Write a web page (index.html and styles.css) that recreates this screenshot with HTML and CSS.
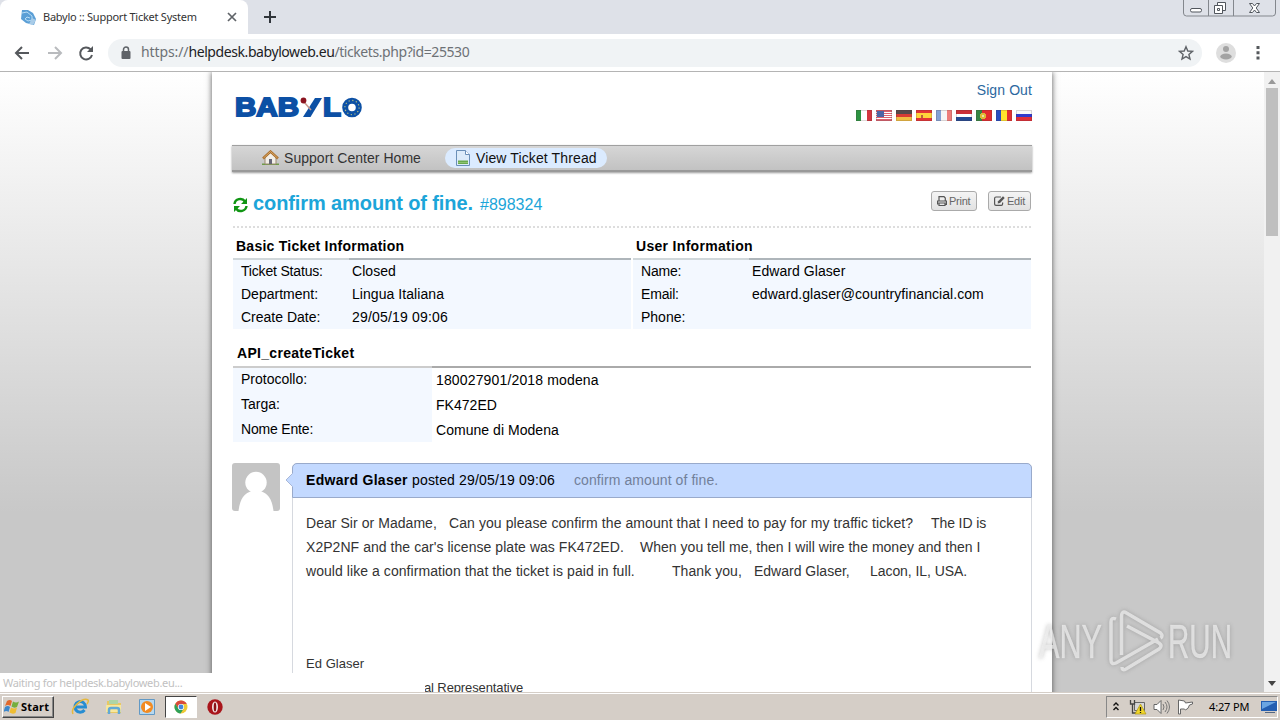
FILE: index.html
```html
<!DOCTYPE html>
<html lang="en">
<head>
<meta charset="utf-8">
<title>Babylo :: Support Ticket System</title>
<link rel="stylesheet" href="styles.css">
</head>
<body>
<div class="screen">
  <header class="tabs">
    <div class="tab">
      <svg class="favicon" width="17" height="17" viewBox="0 0 17 17"><path d="M2 1h6l5 3 3 6-2 6-8-2-5-4z" fill="#5b9fd6"/><path d="M2 4l5-1 5 4 0 4-4 1-3-2 2-2 3 1" fill="none" stroke="#b9ddf5" stroke-width="1"/><path d="M12 9l4 2-3 5-4-1" fill="#a9cce8"/></svg>
      <span class="tab-title">Babylo :: Support Ticket System</span>
      <svg class="tab-close" width="10" height="10" viewBox="0 0 10 10"><path d="M1 1l8 8M9 1l-8 8" stroke="#5f6368" stroke-width="1.7"/></svg>
    </div>
    <svg class="new-tab" width="12" height="12" viewBox="0 0 12 12"><path d="M6 0v12M0 6h12" stroke="#30353b" stroke-width="2"/></svg>
    <svg class="win-controls" width="94" height="18" viewBox="0 0 94 18"><path d="M.5 0v13q0 3 3 3h86q3 0 3-3V0M25.500 0v16M50.500 0v16" fill="none" stroke="#83878d"/><rect x="7.500" y="8.500" width="11" height="3.500" rx="1.500" fill="#fff" stroke="#51565d"/><path d="M34.500 2.500h8v8h-8z" fill="#fff" stroke="#51565d"/><path d="M31.500 5.500h8v8h-8z" fill="#fff" stroke="#51565d"/><path d="M34.500 8.500h2v2h-2z" fill="#fff" stroke="#51565d"/><path d="M66.500 3.500h3l2 2.500 2-2.500h3L73.200 8l3.300 4.500h-3l-2-2.500-2 2.500h-3L69.800 8z" fill="#fff" stroke="#51565d"/></svg>
  </header>
  <div class="toolbar">
    <svg class="nav-icons" width="84" height="18" viewBox="0 0 84 18"><path d="M15 9H2M8 3L2 9l6 6" fill="none" stroke="#55585c" stroke-width="2"/><path d="M34 9h12M41 3l6 6-6 6" fill="none" stroke="#b9bbbe" stroke-width="2"/><path d="M76.500 5.200A6 6 0 1 0 78 11" fill="none" stroke="#55585c" stroke-width="2"/><path d="M79 2v6h-6z" fill="#55585c"/></svg>
    <div class="omnibox">
      <svg width="10" height="14" viewBox="0 0 10 14"><path d="M2.500 6V3.500a2.500 2.500 0 0 1 5 0V6" fill="none" stroke="#5f6368" stroke-width="1.500"/><rect x=".5" y="5" width="9" height="8" rx="1" fill="#5f6368"/></svg>
      <span class="url"><i class="scheme">https://</i><b>helpdesk.babyloweb.eu</b>/tickets.php?id=25530</span>
      <svg class="star" width="16" height="16" viewBox="0 0 16 16"><path d="M8 1.700l1.800 4.300 4.700.4-3.600 3.100 1.100 4.500L8 11.600 4 14l1.100-4.500L1.500 6.400 6.200 6z" fill="none" stroke="#5f6368" stroke-width="1.400"/></svg>
    </div>
    <svg class="profile" width="20" height="20" viewBox="0 0 20 20"><circle cx="10" cy="10" r="10" fill="#dedede"/><circle cx="10" cy="6" r="3" fill="#a3a3a3"/><ellipse cx="10" cy="13.500" rx="5.700" ry="3" fill="#a3a3a3"/></svg>
    <svg class="kebab" width="4" height="14" viewBox="0 0 4 14"><path d="M.5 0h3v3h-3zM.5 5.300h3v3h-3zM.5 10.500h3v3h-3z" fill="#55585c"/></svg>
  </div>
  <div class="viewport">
    <main class="page">
      <div class="masthead">
        <svg class="logo" width="130" height="34" viewBox="0 -5 130 34"><text x="0" y="20" class="logo-text" textLength="64" lengthAdjust="spacingAndGlyphs">BAB</text><path d="M87 2h-7L68 21h7.500z" fill="#0c50a5"/><path d="M69 6l7 8" stroke="#c8988c" stroke-width="1.500"/><circle cx="68.500" cy="4.500" r="2.900" fill="#8b1420"/><text x="88" y="20" class="logo-text" textLength="18" lengthAdjust="spacingAndGlyphs">L</text><circle cx="117" cy="11.500" r="6.800" fill="none" stroke="#0c50a5" stroke-width="6"/><circle cx="117" cy="11.500" r="7.100" fill="none" stroke="#b4bf80" stroke-width="1.200" stroke-dasharray="1.200 2.520"/></svg>
        <div class="account">
          <span class="signout">Sign Out</span>
          <div class="flags">
            <i class="flag it"></i>
            <i class="flag us"></i>
            <i class="flag de"></i>
            <i class="flag es"></i>
            <i class="flag fr"></i>
            <i class="flag nl"></i>
            <i class="flag pt"></i>
            <i class="flag ro"></i>
            <i class="flag ru"></i>
          </div>
        </div>
      </div>
      <nav class="menu">
        <span class="menu-item"><svg width="17" height="16" viewBox="0 0 17 16"><path d="M0 13.500h17V15H0z" fill="#6f9b48"/><path d="M3 7l5.500-5L14 7v7H3z" fill="#f2efe8" stroke="#9b8970"/><path d="M1 8.500l7.500-7 7.500 7" fill="none" stroke="#a86d2c" stroke-width="2.400"/><path d="M1.500 8l7-6.500 7 6.500" fill="none" stroke="#e0b06b" stroke-width=".9"/><path d="M7 9h3v5H7z" fill="#667"/></svg><span class="home-label">Support Center Home</span></span>
        <span class="menu-item active"><svg width="14" height="16" viewBox="0 0 14 16"><path d="M.5.500h9l4 4v11H.5z" fill="#dcebfa" stroke="#6a8fb8"/><path d="M9.500.500v4h4" fill="#fff" stroke="#6a8fb8"/><path d="M2 10.500h10V14H2z" fill="#68a84d"/><path d="M2 12.500h10" stroke="#8cc36f"/></svg><span class="view-label">View Ticket Thread</span></span>
      </nav>
      <div class="title-row">
        <svg class="refresh" width="15" height="16" viewBox="0 0 15 16"><path d="M1.500 7C2 2 9 0 12 4.500M13.500 9C13 14 6 16 3 11.500" fill="none" stroke="#109513" stroke-width="2.400"/><path d="M14 1v6H8zM1 15V9h6z" fill="#109513"/></svg>
        <h1>confirm amount of fine.</h1>
        <span class="number">#898324</span>
        <span class="button print"><svg width="10" height="10" viewBox="0 0 10 10"><path d="M2 5V.600h5L8.300 2v3M.6 8.500V5h8.800v3.500H8M2 7h6v2.500H2z" fill="none" stroke="#555" stroke-width="1.200"/></svg>Print</span>
        <span class="button edit"><svg width="11" height="10" viewBox="0 0 11 10"><path d="M7 1H2Q.6 1 .6 2.400V8Q.6 9.400 2 9.400h5.300q1.300 0 1.300-1.400V6.500" fill="none" stroke="#555" stroke-width="1.200"/><path d="M9 .300l1.700 1.600L6 7l-2.300.500.400-2.300z" fill="#555"/></svg>Edit</span>
      </div>
      <div class="info">
        <section>
          <h2>Basic Ticket Information</h2>
          <dl>
            <dt class="tight">Ticket Status:</dt><dd>Closed</dd>
            <dt>Department:</dt><dd>Lingua Italiana</dd>
            <dt>Create Date:</dt><dd class="date">29/05/19 09:06</dd>
          </dl>
        </section>
        <section>
          <h2>User Information</h2>
          <dl>
            <dt class="tight">Name:</dt><dd>Edward Glaser</dd>
            <dt class="tight">Email:</dt><dd>edward.glaser@countryfinancial.com</dd>
            <dt>Phone:</dt><dd></dd>
          </dl>
        </section>
      </div>
      <section class="api">
        <h2>API_createTicket</h2>
        <dl>
          <dt>Protocollo:</dt><dd>180027901/2018 modena</dd>
          <dt>Targa:</dt><dd class="snug">FK472ED</dd>
          <dt class="tight">Nome Ente:</dt><dd class="snug">Comune di Modena</dd>
        </dl>
      </section>
      <div class="thread">
        <svg class="avatar" width="48" height="48" viewBox="0 0 48 48"><rect width="48" height="48" rx="3" fill="#c4c4c4"/><circle cx="24" cy="19.500" r="10.700" fill="#fff"/><path d="M6.500 48C8 36 12 30 20 28h8c8 2 12 8 13.500 20z" fill="#fff"/></svg>
        <article class="post">
          <div class="post-head"><svg class="notch" width="8" height="14" viewBox="0 0 8 14"><path d="M8 0L1 7l7 7z" fill="#c3d9ff"/><path d="M7.500.500L1 7l6.500 6.500" fill="none" stroke="#a9b8d8"/></svg><strong>Edward Glaser</strong><span class="posted">posted 29/05/19 09:06</span><span class="subject">confirm amount of fine.</span></div>
          <div class="post-body">
            <p><span class="a1">Dear Sir or Madame,</span><span class="a2">Can you please confirm the amount that I need to pay for my traffic ticket?</span><span class="a3">The ID is</span></p>
            <p><span class="b1">X2P2NF and the car's license plate was FK472ED.</span><span class="b2">When you tell me, then I will wire the money and then I</span></p>
            <p><span class="c1">would like a confirmation that the ticket is paid in full.</span><span class="c2">Thank you,</span><span class="c3">Edward Glaser,</span><span class="c4">Lacon, IL, USA.</span></p>
            <p class="signature">Ed Glaser</p>
            <p class="role">al Representative</p>
          </div>
        </article>
      </div>
    </main>
    <div class="scrollbar"><i class="arrow up"></i><i class="thumb"></i><i class="arrow down"></i></div>
    <div class="status">Waiting for helpdesk.babyloweb.eu...</div>
    <svg class="watermark" width="204" height="70" viewBox="0 0 204 70"><g class="wm"><text x="3" y="53" textLength="63" lengthAdjust="spacingAndGlyphs">ANY</text><text x="132" y="53" textLength="64" lengthAdjust="spacingAndGlyphs">RUN</text></g><path d="M80 14q-5-2-5 3v38q0 5 5 3l42-24M85.500 50V12q0-7 5-4l34 20q3 3 0 5M91 21l32 17q4 3 0 6L90 64q-4 2-4-2" fill="none" stroke="#f0f0f0" stroke-opacity=".72" stroke-width="3.500"/></svg>
  </div>
  <footer class="taskbar">
    <div class="start"><svg width="16" height="16" viewBox="0 0 16 16"><path d="M3 2q3-2 5 0L6.500 7Q4 5 1 7z" fill="#e2692d"/><path d="M9 2.500q3 2 6 0L13 8q-3 1.500-5.500-.5z" fill="#75ae3e"/><path d="M1 8q3-2 5 0l-1.500 5q-2-2-5 0z" fill="#3d87cb"/><path d="M7 8.500q3 2 6 0L11.500 14q-3 1.500-6-.5z" fill="#efbd32"/></svg>Start</div>
    <svg class="ie" width="18" height="18" viewBox="0 0 18 18"><path d="M13.500 12a5.300 5.300 0 1 1 1-3H5" fill="none" stroke="#278dd2" stroke-width="3"/><path d="M2 16C-1 10 12-1 17 2q1 1-1 4" fill="none" stroke="#e6b83d" stroke-width="1.500"/></svg>
    <svg class="folder" width="18" height="18" viewBox="0 0 18 18"><path d="M2 3h5l1 2h8v10H2z" fill="#e8c864"/><path d="M4 2h9v4H4z" fill="#aed5a6"/><path d="M1 7h15v7H1z" fill="#f7e79c"/><path d="M4 16v-4q0-2 2-2h6q2 0 2 2v4" fill="none" stroke="#62a9d6" stroke-width="2.500"/></svg>
    <svg class="media" width="16" height="16" viewBox="0 0 16 16"><path d="M.5.500h15v15H.5z" fill="#b7d8ef" stroke="#6299c5"/><circle cx="8" cy="8" r="6" fill="#f28b22"/><path d="M6 4l6 4-6 4z" fill="#fff"/></svg>
    <div class="task-active"><svg width="14" height="14" viewBox="0 0 14 14"><circle cx="7" cy="7" r="6.500" fill="#efc936"/><path d="M1.300 3.800A6.500 6.500 0 0 1 12.800 4H7L4.300 8.500z" fill="#d94a3c"/><path d="M1.300 3.800A6.500 6.500 0 0 0 6.500 13.500L9.500 9 4.300 8.500z" fill="#2da05a"/><circle cx="7" cy="7" r="3.100" fill="#fff"/><circle cx="7" cy="7" r="2.400" fill="#4286dc"/></svg></div>
    <svg class="opera" width="16" height="16" viewBox="0 0 16 16"><circle cx="8" cy="8" r="7.700" fill="#a9151b"/><ellipse cx="8" cy="8" rx="3" ry="5.600" fill="#f3e8e8"/><ellipse cx="8" cy="8" rx="1.300" ry="4.600" fill="#8b1116"/></svg>
    <div class="tray">
      <svg width="8" height="12" viewBox="0 0 8 12"><path d="M1.500 4.500L4 2l2.500 2.500M1.500 9L4 6.500 6.500 9" fill="none" stroke="#111" stroke-width="1.400"/></svg>
      <svg class="net" width="18" height="16" viewBox="0 0 18 16"><path d="M5.500 3.500h10v8h-10z" fill="#d6d6d6" stroke="#666"/><path d="M1.500 1v4h4V1M3.500 5v9h5" fill="none" stroke="#444" stroke-width="1.300"/><path d="M11.500 5l5.500 10H6z" fill="#f1d629" stroke="#ad9715" stroke-width=".7"/><path d="M11.500 8v4M11.500 13v1" stroke="#111" stroke-width="1.300"/></svg>
      <svg class="sound" width="17" height="16" viewBox="0 0 17 16"><path d="M1 5.500h3l4-4v13l-4-4H1z" fill="#fff" stroke="#666"/><path d="M10 5q2 3 0 6M12 3q4 5 0 10M14 1.500q5 6.500 0 13" fill="none" stroke="#777"/></svg>
      <svg class="flag-icon" width="17" height="16" viewBox="0 0 17 16"><path d="M1.500 1v14h2v-5h4l1 1q3-1 4-5l3-1V3l-7 1-1-2z" fill="#fff" stroke="#666"/></svg>
      <span class="clock">4:27 PM</span>
      <svg class="desktop" width="16" height="14" viewBox="0 0 16 14"><path d="M0 1h16v10H0z" fill="#245eb1"/><path d="M1 2h14L1 9z" fill="#6ba5e2"/><path d="M4 12h10v1H4z" fill="#536783"/></svg>
    </div>
  </footer>
</div>
</body>
</html>
```

FILE: styles.css
```css
* { box-sizing: border-box; }
body { margin: 0; font-family: "Liberation Sans", Arial, sans-serif; font-size: 14px; color: #000; }
svg { display: block; flex: none; }
h1, h2, p, dl, dd { margin: 0; }
.screen { width: 1280px; height: 720px; display: flex; flex-direction: column; overflow: hidden; }
.tabs { height: 34px; background: #dee1e8; display: flex; align-items: flex-start; flex: none; }
.tab { width: 248px; height: 34px; background: #fff; border-radius: 8px 8px 0 0; display: flex; align-items: center; padding: 0 11px 0 20px; }
.tab-title { font: 11px "Noto Sans", sans-serif; margin: -2px 0 0 6px; width: 185px; white-space: nowrap; letter-spacing: -.25px; color: #333; }
.tab-close { margin-left: -1px; }
.new-tab { margin: 11px 0 0 16px; }
.win-controls { margin-left: auto; margin-right: 3px; }
.toolbar { height: 38px; background: #fff; border-bottom: 1px solid #b4b4b4; display: flex; align-items: center; flex: none; }
.nav-icons { margin-left: 14px; }
.omnibox { margin-left: 10px; width: 1094px; height: 28px; border-radius: 14px; background: #f0f3f5; display: flex; align-items: center; padding: 0 8px 0 13px; }
.url { font-family: "Noto Sans", sans-serif; font-size: 14px; line-height: 18px; margin: -2px 0 0 10px; color: #6d7175; letter-spacing: -.42px; }
.url b { font-weight: 400; color: #202124; }
.scheme { font-style: normal; letter-spacing: -.1px; }
.star { margin-left: auto; }
.profile { margin-left: 14px; }
.kebab { margin-left: 20px; }
.viewport { height: 620px; flex: none; position: relative; background: linear-gradient(#fff 0, #c8c8c8 440px); display: flex; justify-content: space-between; overflow: hidden; }
.page { width: 840px; margin-left: 212px; height: 650px; background: #fff; box-shadow: 0 0 6px #555; padding: 0 20px; }
.masthead { height: 73px; display: flex; justify-content: space-between; }
.logo { margin: 19px 0 0 3px; }
.logo-text { font: bold 25px "Liberation Sans", sans-serif; fill: #0c50a5; stroke: #0c50a5; stroke-width: 1.8px; }
.account { display: flex; flex-direction: column; align-items: flex-end; padding-top: 9px; }
.signout { color: #2c68a0; line-height: 18px; letter-spacing: .1px; }
.flags { display: flex; gap: 4px; margin-top: 11px; }
.flag { width: 16px; height: 11px; border: 1px solid rgba(70,50,50,.18); }
.it { background: linear-gradient(90deg, #2c9342 33%, #fff 33% 66%, #d43640 66%) border-box; }
.us { background: linear-gradient(#4c65a5, #4c65a5) 0 0 / 7px 6px no-repeat, repeating-linear-gradient(#da6270 0 1px, #fff 1px 2px); }
.de { background: linear-gradient(#55494b 33%, #d63c35 33% 66%, #f0bd43 66%) border-box; }
.es { background: linear-gradient(90deg, transparent 25%, #ba633c 25% 38%, transparent 38%) 0 4px / 16px 3px no-repeat, linear-gradient(#e33436 27%, #ffd43b 27% 73%, #e33436 73%) border-box; }
.fr { background: linear-gradient(90deg, #84a1d5 33%, #f6f6f6 33% 66%, #ed7d7b 66%) border-box; }
.nl { background: linear-gradient(#cb3038 33%, #fff 33% 66%, #244a93 66%) border-box; }
.pt { background: radial-gradient(circle at 6px 5px, #e9e2a2 0 1.5px, #ddba35 1.5px 3px, transparent 3px), linear-gradient(90deg, #368544 38%, #e12d2f 38%) border-box; }
.ro { background: linear-gradient(90deg, #284dc0 33%, #ffe52c 33% 66%, #e23130 66%) border-box; }
.ru { background: linear-gradient(#f8f8f8 33%, #303acb 33% 66%, #df2e37 66%) border-box; }
.menu { height: 27px; border-top: 1px solid #a0a0a0; border-bottom: 2px solid #999; background: linear-gradient(#d6d6d6, #c2c2c2); box-shadow: 0 1px 2px #999; display: flex; align-items: center; padding-left: 30px; color: #333; }
.menu-item { display: flex; align-items: center; gap: 5px; height: 20px; white-space: nowrap; }
.menu-item.active { margin-left: 24px; width: 162px; background: #dbebff; border-radius: 10px; padding-left: 11px; gap: 6px; color: #111; }
.home-label { letter-spacing: .04px; width: 137px; }
.view-label { letter-spacing: .12px; }
.title-row { height: 56px; margin: 0 1px; border-bottom: 2px dotted #ddd; display: flex; align-items: flex-start; }
.refresh { margin-top: 25px; }
h1 { font-size: 20px; line-height: 24px; color: #1ca5d9; margin: 19px 0 0 5px; letter-spacing: -.1px; width: 220px; white-space: nowrap; }
.number { color: #1ca5d9; font-size: 16px; line-height: 20px; margin: 23px 0 0 7px; }
.button { height: 20px; margin-top: 19px; border: 1px solid #aaa; border-radius: 3px; background: linear-gradient(#f4f4f4, #e2e2e2); font-size: 11px; letter-spacing: -.25px; color: #666; display: flex; align-items: center; gap: 2px; padding-left: 5px; white-space: nowrap; }
.print { width: 46px; margin-left: auto; margin-right: 11px; }
.edit { width: 43px; }
.info { display: flex; gap: 2px; margin: 0 1px; }
.info section { width: 398px; }
h2 { font-size: 14px; line-height: 16px; letter-spacing: .25px; white-space: nowrap; }
.info h2 { height: 30px; padding: 10px 0 0 3px; }
.info section + section h2 { letter-spacing: .31px; }
.info dl { display: grid; grid-template-columns: 116px 1fr; grid-auto-rows: 23px; line-height: 23px; background: linear-gradient(90deg, #d0d7da 116px, #aeb5ba 116px) 0 0 / 100% 2px no-repeat, #f3f8ff; padding-top: 2px; height: 71px; }
dt { padding-left: 8px; }
.tight { letter-spacing: -.18px; }
.info dd { padding-left: 3px; letter-spacing: .06px; }
.info .date { letter-spacing: .18px; }
.api { margin: 0 1px; height: 134px; padding-top: 16px; }
.api h2 { height: 21px; padding-left: 4px; letter-spacing: .3px; }
.api dl { display: grid; grid-template-columns: 199px 1fr; grid-auto-rows: 25px; line-height: 23px; background: linear-gradient(90deg, #ccc 199px, #aaa 199px) 0 0 / 100% 2px no-repeat, linear-gradient(90deg, #f3f8ff 199px, #fff 199px); padding-top: 2px; height: 76px; }
.api dd { padding: 1px 0 0 4px; letter-spacing: .15px; }
.api .snug { letter-spacing: .04px; }
.thread { display: flex; gap: 12px; }
.post { width: 740px; height: 240px; border: 1px solid #d6d9df; border-radius: 5px 5px 0 0; }
.post-head { position: relative; height: 35px; margin: -1px -1px 0; border: 1px solid #99aacb; border-radius: 5px 5px 0 0; background: #c3d9ff; padding-left: 13px; line-height: 33px; display: flex; white-space: nowrap; }
.notch { position: absolute; left: -8px; top: 9px; }
.post-head strong { width: 106px; letter-spacing: .29px; }
.posted { width: 162px; letter-spacing: .17px; }
.subject { color: #72809a; letter-spacing: .08px; }
.post-body { padding: 13px 0 0 13px; color: #333; }
.post-body p { height: 24px; line-height: 24px; display: flex; white-space: nowrap; }
.a1 { width: 143px; letter-spacing: .05px; }
.a2 { width: 482px; letter-spacing: .08px; }
.a3 { letter-spacing: -.1px; }
.b1 { width: 334px; letter-spacing: .05px; }
.b2 { letter-spacing: .02px; }
.c1 { width: 366px; letter-spacing: .06px; }
.c2 { width: 82px; letter-spacing: .06px; }
.c3 { width: 116px; }
.c4 { letter-spacing: -.06px; }
.post-body .signature { margin-top: 69px; font-size: 13px; letter-spacing: .05px; }
.post-body .role { padding-left: 118px; font-size: 13px; letter-spacing: -.12px; }
.scrollbar { width: 16px; height: 620px; background: #f1f1f1; display: flex; flex-direction: column; align-items: center; }
.arrow { border: 4px solid transparent; flex: none; }
.up { border-bottom: 5px solid #999; border-top: 0; margin-top: 7px; }
.down { border-top: 5px solid #444; border-bottom: 0; margin: auto 0 6px; }
.thumb { width: 12px; height: 148px; background: #bfbfbf; margin-top: 4px; flex: none; }
.status { position: absolute; left: 0; bottom: 0; width: 425px; height: 19px; padding-left: 3px; background: #fff; color: #c1c1c1; font: 11px/20px "Noto Sans", sans-serif; letter-spacing: -.31px; border-radius: 0 3px 0 0; }
.watermark { position: absolute; left: 1036px; top: 533px; filter: drop-shadow(0 0 2px rgba(80,80,80,.45)); }
.wm { fill: #f0f0f0; fill-opacity: .72; stroke: #f0f0f0; stroke-opacity: .4; stroke-width: .6px; font: 48px "Liberation Sans", sans-serif; }
.taskbar { height: 28px; flex: none; background: #d5cec7; border-top: 1px solid #d5cec7; box-shadow: inset 0 1px #fff; display: flex; align-items: center; padding: 1px 2px 0; }
.start { width: 52px; height: 22px; border: 1px solid; border-color: #fff #444 #444 #fff; box-shadow: inset -1px -1px #888; display: flex; align-items: center; font: bold 11px "Noto Sans", sans-serif; gap: 1px; padding: 0 0 1px 1px; letter-spacing: .2px; }
.ie { margin-left: 17px; }
.folder { margin-left: 16px; }
.media { margin-left: 16px; }
.task-active { margin-left: 10px; width: 32px; height: 22px; border: 1px solid; border-color: #444 #fff #fff #444; background: #fff; display: flex; align-items: center; justify-content: center; }
.opera { margin-left: 10px; }
.tray { margin-left: auto; width: 172px; height: 22px; border: 1px solid; border-color: #888 #fff #fff #888; display: flex; align-items: center; padding-left: 5px; }
.net { margin-left: 9px; }
.sound { margin-left: 6px; }
.flag-icon { margin-left: 7px; }
.clock { margin-left: 15px; width: 52px; font: 11px "Noto Sans", sans-serif; letter-spacing: -.15px; padding-bottom: 1px; white-space: nowrap; }
```
